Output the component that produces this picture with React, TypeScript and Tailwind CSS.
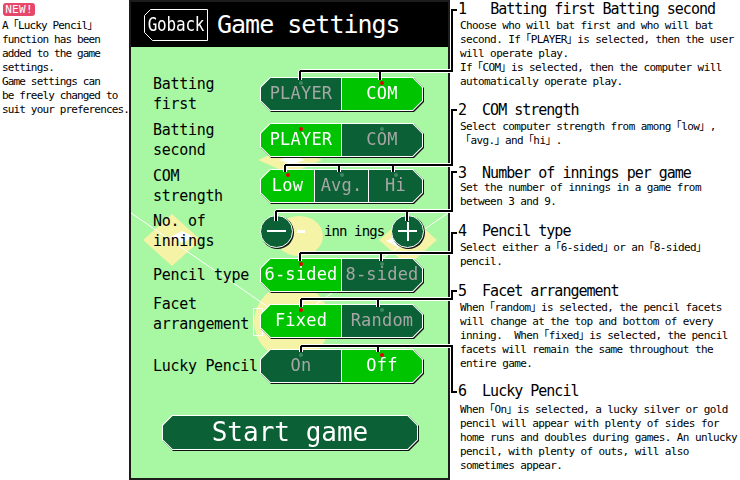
import React from 'react';

const mono = "font-['DejaVu_Sans_Mono','Noto_Sans_CJK_JP',monospace]";
const octagon =
  '[clip-path:polygon(10px_0,calc(100%_-_10px)_0,100%_10px,100%_calc(100%_-_10px),calc(100%_-_10px)_100%,10px_100%,0_calc(100%_-_10px),0_10px)]';
const octagonInner =
  '[clip-path:polygon(9.5px_0,calc(100%_-_9.5px)_0,100%_9.5px,100%_calc(100%_-_9.5px),calc(100%_-_9.5px)_100%,9.5px_100%,0_calc(100%_-_9.5px),0_9.5px)]';

type Seg = { label: string; on: boolean };

function Toggle({ items }: { items: Seg[] }) {
  return (
    <div className="drop-shadow-[1px_1px_0_#111]">
      <div className={`${octagon} flex h-[34px] w-[163px] bg-white p-px`}>
        <div className={`${octagonInner} flex flex-1 gap-px`}>
          {items.map((s) => (
            <div
              key={s.label}
              className={`relative flex flex-1 items-center justify-center text-[17px] tracking-[0.2px] ${mono} ${
                s.on ? 'bg-[#00c400] text-white' : 'bg-[#0b6035] text-[#a6a6a6]'
              }`}
            >
              <span
                className={`absolute left-1/2 top-[3px] size-[4px] -translate-x-1/2 rounded-full ${
                  s.on ? 'bg-[#e40000]' : 'bg-[#3e8760]'
                }`}
              />
              {s.label}
            </div>
          ))}
        </div>
      </div>
    </div>
  );
}

function Label({ children, className = '' }: { children: React.ReactNode; className?: string }) {
  return (
    <div className={`w-[107px] shrink-0 text-[15px] leading-[20px] tracking-[-0.3px] text-black ${mono} ${className}`}>
      {children}
    </div>
  );
}

function RoundButton({ plus }: { plus?: boolean }) {
  return (
    <div className="relative flex size-[33px] shrink-0 items-center justify-center rounded-full border border-white bg-[#0b6035] shadow-[1px_1px_0_#111]">
      <span className="absolute h-[2px] w-[19px] bg-white" />
      {plus && <span className="absolute h-[19px] w-[2px] bg-white" />}
    </div>
  );
}

// baseball field painted under the settings
function Field() {
  return (
    <svg
      className="absolute left-0 top-[45px]"
      width={317}
      height={431}
      viewBox="131 47 317 431"
    >
      <polygon points="290,146 322,160 290,174 258,160" fill="#f4f3a6" />
      <polygon points="292,156 305,160 292,164 279,160" fill="#ffffff" />
      <polygon points="172,214 201,240 172,266 143,240" fill="#f4f3a6" />
      <polygon points="408,214 437,240 408,266 379,240" fill="#f4f3a6" />
      <ellipse cx={299} cy={236} rx={24} ry={20} fill="#f4f3a6" />
      <circle cx={292} cy={322} r={38} fill="#f4f3a6" />
      <line x1={131} y1={213} x2={290} y2={322} stroke="#ffffff" strokeWidth={1} />
      <line x1={448} y1={213} x2={290} y2={322} stroke="#ffffff" strokeWidth={1} />
      <polygon points="182,231 194,237 182,243 170,237" fill="#ffffff" />
      <polygon points="398,235 410,241 398,247 386,241" fill="#ffffff" />
      <rect x={253.5} y={308.5} width={9} height={27} fill="none" stroke="#ffffff" strokeWidth={1} />
    </svg>
  );
}

function Screen() {
  return (
    <div className="relative h-[480px] w-[321px] shrink-0 overflow-hidden border-2 border-[#1c1c1c] bg-[#a8f7a2]">
      <div className="flex h-[45px] items-center bg-black pl-[13px]">
        <div className="relative flex h-[32px] w-[64px] items-center justify-center">
          <svg className="absolute inset-0" width={64} height={32}>
            <polygon
              points="6.5,0.5 63.5,0.5 63.5,31.5 8.5,31.5 0.5,23.5 0.5,6.5"
              fill="none"
              stroke="#ffffff"
              strokeWidth={1}
            />
          </svg>
          <span className={`inline-block scale-y-[1.25] text-[16px] tracking-[-0.2px] text-white ${mono}`}>Goback</span>
        </div>
        <span className={`ml-[9px] text-[25px] leading-none tracking-[-1px] text-white ${mono}`}>Game settings</span>
      </div>

      <Field />

      <div className="relative flex flex-col pl-[22px] pt-[27px]">
        <div className="flex h-[40px] items-center">
          <Label>
            Batting
            <br />
            first
          </Label>
          <Toggle items={[{ label: 'PLAYER', on: false }, { label: 'COM', on: true }]} />
        </div>
        <div className="mt-[6px] flex h-[40px] items-center">
          <Label>
            Batting
            <br />
            second
          </Label>
          <Toggle items={[{ label: 'PLAYER', on: true }, { label: 'COM', on: false }]} />
        </div>
        <div className="mt-[6px] flex h-[40px] items-center">
          <Label>
            COM
            <br />
            strength
          </Label>
          <Toggle
            items={[
              { label: 'Low', on: true },
              { label: 'Avg.', on: false },
              { label: 'Hi', on: false },
            ]}
          />
        </div>
        <div className="mt-[5px] flex h-[40px] items-center">
          <Label>
            No. of
            <br />
            innings
          </Label>
          <RoundButton />
          <span className="ml-[4px] h-[3px] w-[8px] bg-white" />
          <span className={`ml-[19px] text-[14px] tracking-[-0.9px] text-black ${mono}`}>inn ings</span>
          <div className="ml-[7px]">
            <RoundButton plus />
          </div>
        </div>
        <div className="mt-[4px] flex h-[40px] items-center">
          <Label>Pencil type</Label>
          <Toggle items={[{ label: '6-sided', on: true }, { label: '8-sided', on: false }]} />
        </div>
        <div className="mt-[6px] flex h-[40px] items-center">
          <Label className="mb-[14px]">
            Facet
            <br />
            arrangement
          </Label>
          <Toggle items={[{ label: 'Fixed', on: true }, { label: 'Random', on: false }]} />
        </div>
        <div className="mt-[5px] flex h-[40px] items-center">
          <Label>Lucky Pencil</Label>
          <Toggle items={[{ label: 'On', on: false }, { label: 'Off', on: true }]} />
        </div>

        <div className="ml-[9px] mt-[29px] drop-shadow-[1px_1px_0_#111]">
          <div className={`${octagon} h-[35px] w-[256px] bg-white p-px`}>
            <div
              className={`${octagonInner} flex h-full items-center justify-center bg-[#0b6035] text-[26px] text-white ${mono}`}
            >
              Start game
            </div>
          </div>
        </div>
      </div>
    </div>
  );
}

const notes = [
  {
    n: '1   ',
    title: 'Batting first Batting second',
    mt: 'mt-[1px]',
    dmt: 'mt-[2px]',
    lines: [
      'Choose who will bat first and who will bat',
      'second. If「PLAYER」is selected, then the user',
      'will operate play.',
      'If「COM」is selected, then the computer will',
      'automatically operate play.',
    ],
  },
  {
    n: '2  ',
    title: 'COM strength',
    mt: 'mt-[13px]',
    dmt: 'mt-[2px]',
    lines: ['Select computer strength from among「low」,', '「avg.」and「hi」.'],
  },
  {
    n: '3  ',
    title: 'Number of innings per game',
    mt: 'mt-[17px]',
    dmt: 'mt-0',
    lines: ['Set the number of innings in a game from', 'between 3 and 9.'],
  },
  {
    n: '4  ',
    title: 'Pencil type',
    mt: 'mt-[14px]',
    dmt: 'mt-[2px]',
    lines: ['Select either a「6-sided」or an「8-sided」', 'pencil.'],
  },
  {
    n: '5  ',
    title: 'Facet arrangement',
    mt: 'mt-[14px]',
    dmt: 'mt-[2px]',
    lines: [
      'When「random」is selected, the pencil facets',
      'will change at the top and bottom of every',
      'inning.  When「fixed」is selected, the pencil',
      'facets will remain the same throughout the',
      'entire game.',
    ],
  },
  {
    n: '6  ',
    title: 'Lucky Pencil',
    mt: 'mt-[12px]',
    dmt: 'mt-[4px]',
    lines: [
      'When「On」is selected, a lucky silver or gold',
      'pencil will appear with plenty of sides for',
      'home runs and doubles during games. An unlucky',
      'pencil, with plenty of outs, will also',
      'sometimes appear.',
    ],
  },
];

const links = [
  { y0: 10, y1: 71, ticks: [300, 380], end: 80 },
  { y0: 110, y1: 165, ticks: [285, 339, 393], end: 172 },
  { y0: 172, y1: 211, ticks: [276, 407], end: 221 },
  { y0: 233, y1: 253, ticks: [300, 381], end: 261 },
  { y0: 291, y1: 299, ticks: [301, 378], end: 307 },
  { y0: 392, y1: 346, ticks: [301, 378], end: 352 },
];

function Connectors() {
  const d = links
    .map(
      (l) =>
        `M457 ${l.y0}H452V${l.y1}H${l.ticks[0]}` + l.ticks.map((t) => `M${t} ${l.y1}V${l.end}`).join('')
    )
    .join('');
  return (
    <svg className="pointer-events-none absolute left-0 top-0" width={740} height={480}>
      <path d={d} fill="none" stroke="#ffffff" strokeWidth={4} />
      <path d={d} fill="none" stroke="#000000" strokeWidth={2} />
    </svg>
  );
}

export default function App() {
  return (
    <div className="relative flex h-[480px] w-[740px] overflow-hidden bg-white text-black">
      <div className={`w-[129px] shrink-0 pl-[2px] pt-[3px] ${mono}`}>
        <div className="ml-px flex h-[13px] w-[32px] items-center justify-center rounded-[3px] bg-[#e6486a] text-[11px] leading-none tracking-[0.3px] text-white">
          NEW!
        </div>
        <div className="mt-[3px] whitespace-nowrap text-[11px] leading-[14px] tracking-[-0.85px]">
          <div>A「Lucky Pencil」</div>
          <div>function has been</div>
          <div>added to the game</div>
          <div>settings.</div>
          <div>Game settings can</div>
          <div>be freely changed to</div>
          <div>suit your preferences.</div>
        </div>
      </div>

      <Screen />

      <div className={`flex flex-col ${mono}`}>
        {notes.map((s) => (
          <div key={s.title} className={s.mt}>
            <div className="ml-[8px] whitespace-pre text-[15px] leading-[16px] tracking-[-1px]">
              {s.n}
              {s.title}
            </div>
            <div className={`ml-[10px] whitespace-pre text-[11px] leading-[14px] tracking-[-0.6px] ${s.dmt}`}>
              {s.lines.map((line) => (
                <div key={line}>{line}</div>
              ))}
            </div>
          </div>
        ))}
      </div>

      <Connectors />
    </div>
  );
}
